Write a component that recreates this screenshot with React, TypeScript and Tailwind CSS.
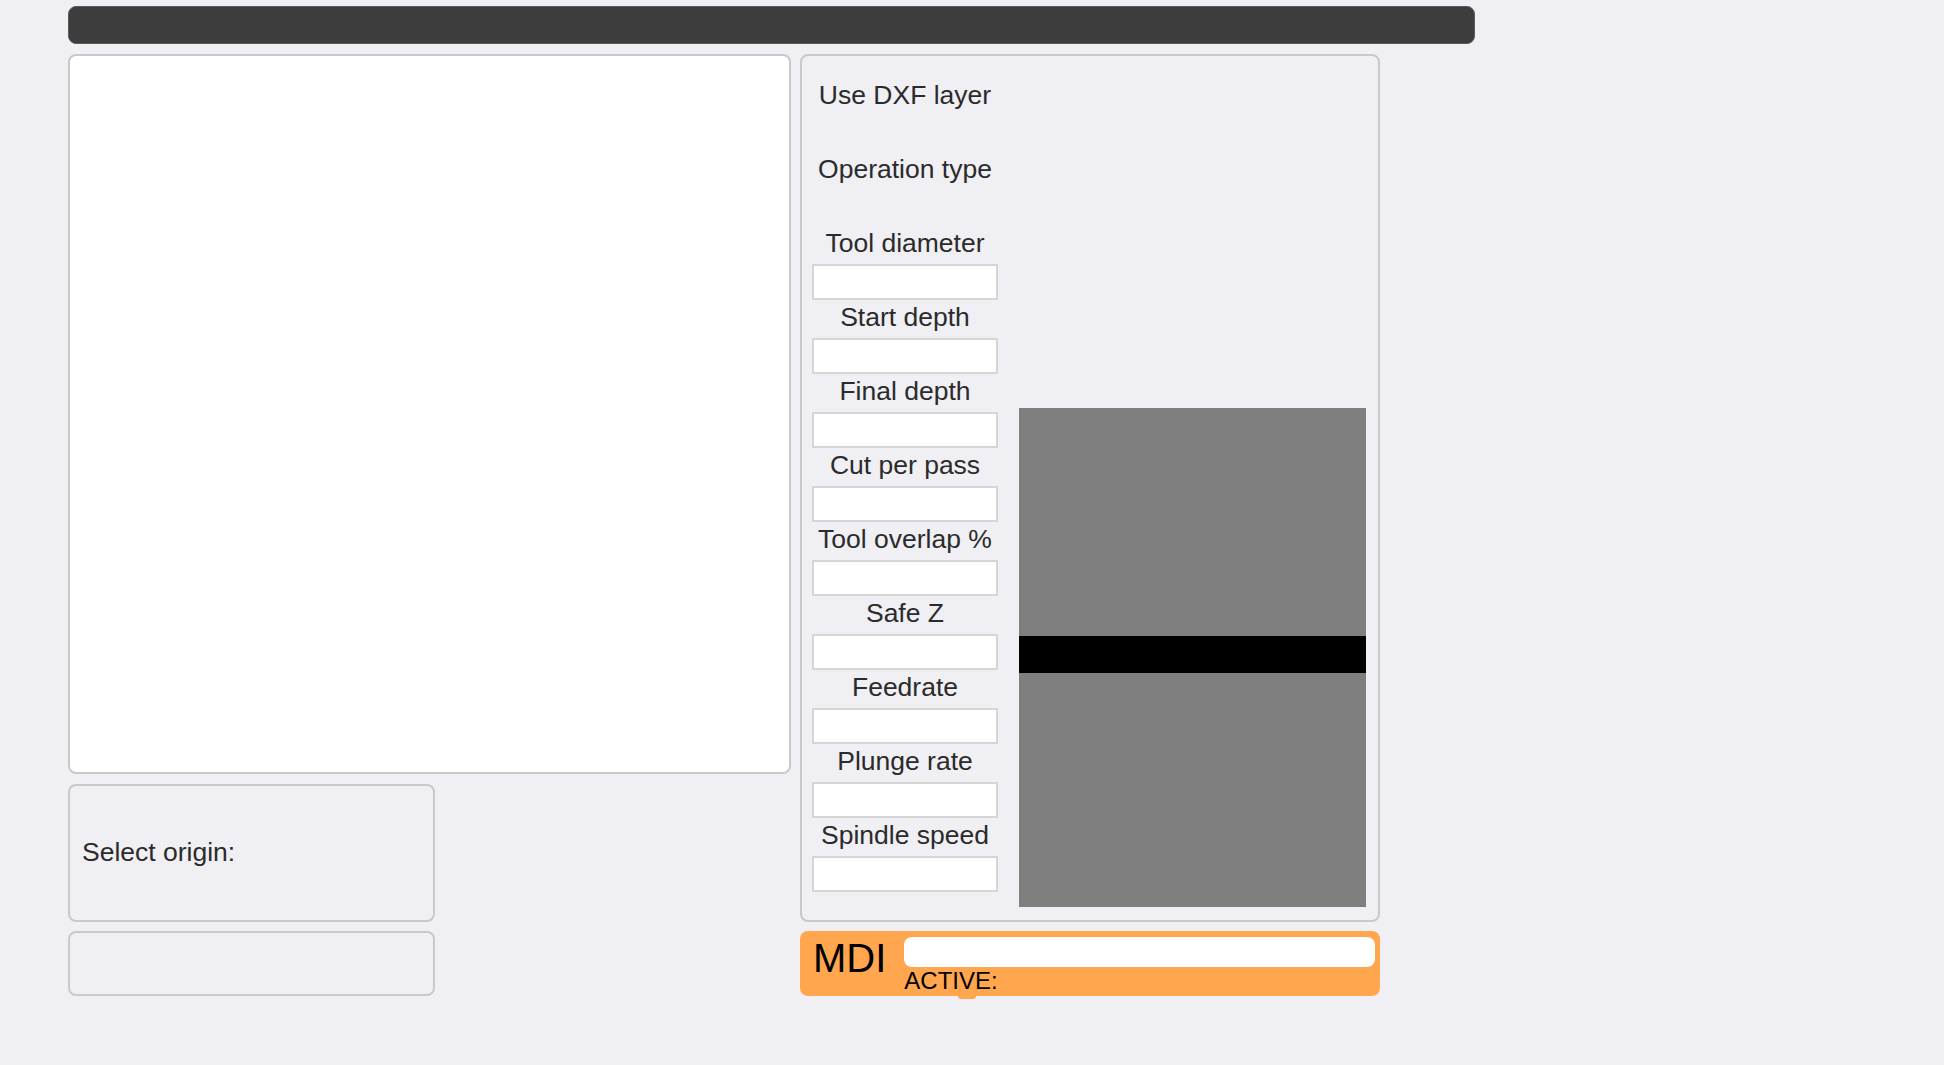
import React from 'react';

const fields: { label: string; input: boolean }[] = [
  { label: 'Use DXF layer', input: false },
  { label: 'Operation type', input: false },
  { label: 'Tool diameter', input: true },
  { label: 'Start depth', input: true },
  { label: 'Final depth', input: true },
  { label: 'Cut per pass', input: true },
  { label: 'Tool overlap %', input: true },
  { label: 'Safe Z', input: true },
  { label: 'Feedrate', input: true },
  { label: 'Plunge rate', input: true },
  { label: 'Spindle speed', input: true },
];

const App: React.FC = () => {
  return (
    <div
      className="w-full h-[1065px] bg-[#efeff4] pl-[68px] pt-[6px] text-[#2b2b2b]"
      style={{ fontFamily: '"Liberation Sans", Arial, sans-serif' }}
    >
      {/* top bar */}
      <div className="w-[1407px] h-[38px] rounded-lg bg-[#3d3d3d] border border-[#5a5a5a]" />

      <div className="flex mt-[10px]">
        {/* left column */}
        <div className="w-[723px] flex flex-col">
          <div className="h-[720px] bg-white border-2 border-[#c9c9c9] rounded-lg" />
          <div className="mt-[10px] w-[367px] h-[138px] border-2 border-[#c9c9c9] rounded-lg flex items-center pl-[12px] text-[26.5px]">
            Select origin:
          </div>
          <div className="mt-[9px] w-[367px] h-[65px] border-2 border-[#c9c9c9] rounded-lg" />
        </div>

        {/* right column */}
        <div className="ml-[9px] w-[580px] flex flex-col">
          <div className="h-[868px] border-2 border-[#c9c9c9] rounded-lg pt-[22px] pb-[13px] pl-[10px] flex">
            <div className="w-[186px] flex flex-col pb-[13px]">
              {fields.map((f) => (
                <div key={f.label} className="flex flex-col">
                  <div className="h-[38px] flex items-center justify-center text-[26.5px] leading-none whitespace-nowrap pb-[3px]">
                    {f.label}
                  </div>
                  {f.input ? (
                    <input
                      type="text"
                      className="h-[36px] w-[186px] bg-white border-2 border-[#d6d6d6] outline-none"
                    />
                  ) : (
                    <div className="h-[36px]" />
                  )}
                </div>
              ))}
            </div>
            <div className="self-end ml-[21px] w-[347px] h-[499px] flex flex-col bg-[#7f7f7f]">
              <div className="h-[228px]" />
              <div className="h-[37px] bg-black" />
              <div className="flex-1" />
            </div>
          </div>

          {/* MDI */}
          <div className="relative mt-[9px] h-[65px] rounded-lg bg-[#ffa64f] flex items-start">
            <div className="ml-[13px] mt-[7px] text-[40px] leading-none text-black">MDI</div>
            <div className="ml-[18px] mt-[6px] flex flex-col">
              <div className="w-[471px] h-[30px] rounded-lg bg-white" />
              <div className="mt-[2px] text-[24px] leading-none text-black">ACTIVE:</div>
            </div>
            <div className="absolute left-[158px] bottom-[-3px] w-[18px] h-[6px] rounded-full bg-[#ffa64f]" />
          </div>
        </div>
      </div>
    </div>
  );
};

export default App;
